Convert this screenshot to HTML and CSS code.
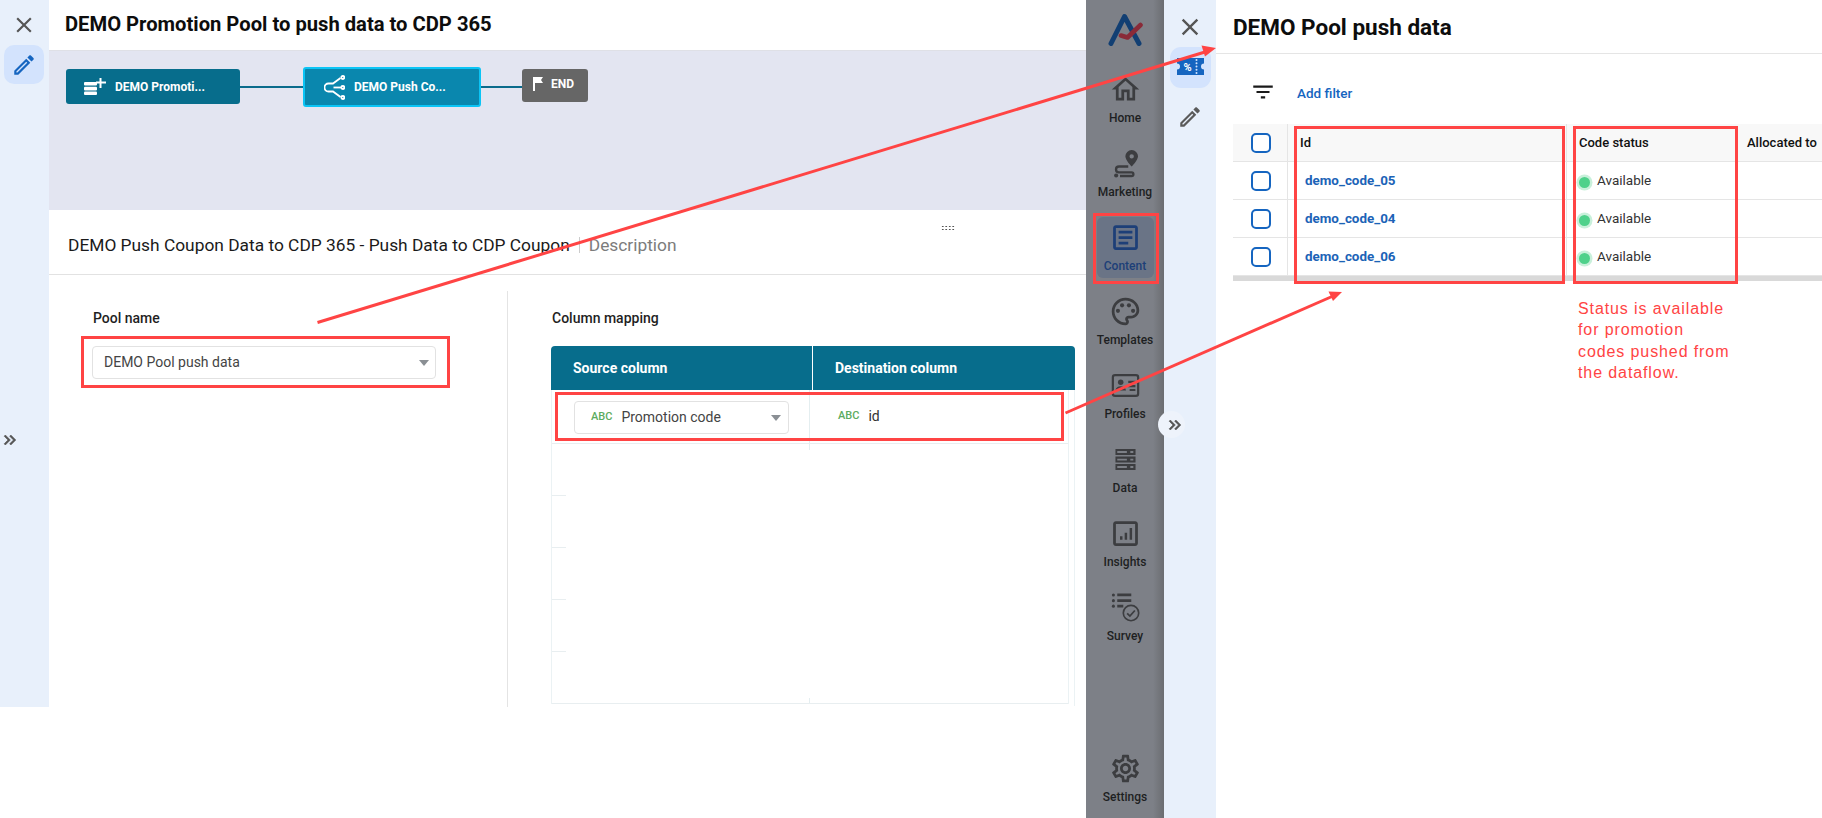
FILE: index.html
```html
<!DOCTYPE html>
<html lang="en">
<head>
<meta charset="utf-8">
<title>DEMO Promotion Pool</title>
<link rel="stylesheet" href="styles.css">
</head>
<body>
<div class="page">
  <section class="flow-window">
    <aside class="rail rail-left">
      <svg class="icon-26 close close-left" viewBox="0 0 24 24"><path d="M19 6.41L17.59 5 12 10.59 6.41 5 5 6.41 10.59 12 5 17.59 6.41 19 12 13.41 17.59 19 19 17.59 13.41 12z"/></svg>
      <div class="tile tile-left">
        <svg class="icon-26 blue" viewBox="0 0 24 24"><path d="M3 17.25V21h3.75L17.81 9.94l-3.75-3.75L3 17.25zM5.92 19H5v-.92l9.06-9.06.92.92L5.92 19zM20.71 7.04a.996.996 0 000-1.41l-2.34-2.34c-.2-.2-.45-.29-.71-.29s-.51.1-.7.29l-1.83 1.83 3.75 3.75 1.83-1.83z"/></svg>
      </div>
      <svg class="expand expand-left" viewBox="0 0 24 24"><path d="M6.41 6L5 7.41 9.58 12 5 16.59 6.41 18l6-6z"/><path d="M13 6l-1.41 1.41L16.17 12l-4.58 4.59L13 18l6-6z"/></svg>
    </aside>
    <main class="flow-main">
      <header class="flow-head"><h1 class="title title-flow">DEMO Promotion Pool to push data to CDP 365</h1></header>
      <div class="canvas">
        <div class="wire wire-a"></div>
        <div class="wire wire-b"></div>
        <div class="node node-source">
          <svg class="node-icon icon-source" viewBox="0 0 22 17"><g fill="#fff"><rect x="0" y="4" width="13" height="3.6" rx="1"/><rect x="0" y="8.8" width="13" height="3.6" rx="1"/><rect x="0" y="13.4" width="13" height="3.6" rx="1"/><path d="M15.5 0h2v3.5H22v2h-4.5V10h-2V5.5H12v-2h3.5z"/></g></svg>
          <span>DEMO Promoti...</span>
        </div>
        <div class="node node-dest">
          <svg class="node-icon icon-dest" viewBox="0 0 21 25" fill="none" stroke="#fff" stroke-width="1.8"><path d="M16.500 3L9 8.500H4.500a4 4 0 000 8H9L16.500 22"/><path d="M9.500 12.500h7.500"/><circle cx="18.800" cy="2.500" r="1.500"/><circle cx="18.800" cy="12.500" r="1.500"/><circle cx="18.800" cy="22.500" r="1.500"/></svg>
          <span>DEMO Push Co...</span>
        </div>
        <div class="node node-end">
          <svg class="node-icon icon-end" viewBox="0 0 10 14"><path fill="#fff" d="M0 0h10L8 3l2 3H2v8H0z"/></svg>
          <span>END</span>
        </div>
      </div>
      <div class="step-head">
        <span class="step-name">DEMO Push Coupon Data to CDP 365 - Push Data to CDP Coupon</span>
        <span class="step-sep"></span>
        <span class="step-desc">Description</span>
        <span class="grip"></span>
      </div>
      <div class="step-body">
        <div class="pool-col">
          <div class="field-label">Pool name</div>
          <div class="select select-pool"><span>DEMO Pool push data</span><i class="caret"></i></div>
        </div>
        <div class="map-col">
          <div class="field-label">Column mapping</div>
          <div class="map-head"><div class="map-h map-h-a">Source column</div><div class="map-h map-h-b">Destination column</div></div>
          <div class="map-outer">
            <div class="map-body">
              <div class="map-row">
                <div class="map-cell-a">
                  <div class="select select-source"><span class="abc">ABC</span><span>Promotion code</span><i class="caret"></i></div>
                </div>
                <div class="map-cell-b"><span class="abc">ABC</span><span>id</span></div>
              </div>
              <div class="tick tick-first"></div>
              <div class="tick"></div>
              <div class="tick"></div>
              <div class="tick"></div>
              <div class="tick tick-last"></div>
            </div>
          </div>
        </div>
      </div>
    </main>
  </section>

  <nav class="nav">
    <svg class="logo" viewBox="0 0 35 33" fill="none" stroke-linecap="round" stroke-linejoin="round"><path d="M3 30.500L16.500 3.500 31 30.500" stroke="#123f73" stroke-width="5"/><path d="M13 22.500l6.500 2L32.500 12" stroke="#8a2a38" stroke-width="4.600"/></svg>
    <div class="nav-items">
      <div class="nav-item"><svg class="nav-icon" viewBox="0 0 24 24"><path d="M12 5.69l5 4.5V18h-2v-6H9v6H7v-7.81l5-4.5M12 3L2 12h3v8h6v-6h2v6h6v-8h3L12 3z"/></svg><span>Home</span></div>
      <div class="nav-item"><svg class="nav-icon" viewBox="0 0 24 24"><path d="M16.500 2.200a4.600 4.600 0 00-4.600 4.600c0 3 4.600 7.400 4.600 7.400s4.600-4.400 4.600-7.400a4.600 4.600 0 00-4.600-4.600zm0 6.200a1.600 1.600 0 110-3.200 1.600 1.600 0 010 3.200z"/><path fill="none" stroke="#3c3d40" stroke-width="1.700" d="M14 14.200H7.200a2.100 2.100 0 000 4.200h9.200a1.300 1.300 0 010 2.700H8"/><circle cx="5.200" cy="20.700" r="1.500"/></svg><span>Marketing</span></div>
      <div class="nav-item nav-active"><svg class="nav-icon" viewBox="0 0 24 24"><path d="M19 5v14H5V5h14m0-2H5c-1.100 0-2 .9-2 2v14c0 1.100.9 2 2 2h14c1.100 0 2-.9 2-2V5c0-1.100-.9-2-2-2z"/><path d="M14 17H7v-2h7v2zm3-4H7v-2h10v2zm0-4H7V7h10v2z"/></svg><span>Content</span></div>
      <div class="nav-item"><svg class="nav-icon" viewBox="0 0 24 24"><path d="M12 22C6.490 22 2 17.510 2 12S6.490 2 12 2s10 4.040 10 9c0 3.310-2.690 6-6 6h-1.770c-.28 0-.5.22-.5.5 0 .12.05.23.13.33.41.47.64 1.060.64 1.670 0 1.380-1.120 2.500-2.500 2.500zm0-18c-4.410 0-8 3.590-8 8s3.590 8 8 8c.28 0 .5-.22.5-.5 0-.16-.08-.28-.14-.35-.41-.46-.63-1.050-.63-1.650 0-1.380 1.120-2.500 2.500-2.500H16c2.210 0 4-1.790 4-4 0-3.860-3.590-7-8-7z"/><circle cx="6.500" cy="11.500" r="1.500"/><circle cx="9.500" cy="7.500" r="1.500"/><circle cx="14.500" cy="7.500" r="1.500"/><circle cx="17.500" cy="11.500" r="1.500"/></svg><span>Templates</span></div>
      <div class="nav-item"><svg class="nav-icon" viewBox="0 0 24 24"><rect x="2.800" y="4.400" width="18.400" height="15.200" rx="1.600" fill="none" stroke="#3c3d40" stroke-width="1.600"/><circle cx="8.500" cy="9.600" r="2"/><path d="M4.600 15.600c.4-2 2-3 3.900-3s3.500 1 3.900 3z"/><path d="M14 8.500h5.200v1.600H14zM14 11.600h5.200v1.600H14zM15 14.600h4.200V16H15z"/></svg><span>Profiles</span></div>
      <div class="nav-item"><svg class="nav-icon" viewBox="0 0 24 24"><path fill-rule="evenodd" d="M4.700 4.400h14.600v4.300H4.700zM6 5.900v1.300h7V5.900zM15.500 5.900v1.300h2.200V5.900zM4.700 9.900h14.600v4.300H4.700zM6 11.400v1.300h7v-1.300zM15.500 11.400v1.300h2.200v-1.300zM4.700 15.300h14.600v4.300H4.700zM6 16.800v1.300h7v-1.300zM15.500 16.800v1.300h2.200v-1.300z"/></svg><span>Data</span></div>
      <div class="nav-item"><svg class="nav-icon" viewBox="0 0 24 24"><path d="M19 5v14H5V5h14m0-2H5c-1.100 0-2 .9-2 2v14c0 1.100.9 2 2 2h14c1.100 0 2-.9 2-2V5c0-1.100-.9-2-2-2z"/><path d="M8 14h1.800v2.600H8zM11.400 11.400h1.800v5.200h-1.800zM15 8h1.800v8.600H15z"/></svg><span>Insights</span></div>
      <div class="nav-item"><svg class="nav-icon" viewBox="0 0 24 24"><circle cx="3.200" cy="2.900" r="1.100"/><circle cx="3.200" cy="7" r="1.100"/><circle cx="3.200" cy="11" r="1.100"/><path d="M6 1.900h10.200v2H6zM6 6h10.200v2H6zM6 10h4.400v2H6z"/><circle cx="16" cy="16" r="5.600" fill="none" stroke="#3c3d40" stroke-width="1.200"/><path fill="none" stroke="#3c3d40" stroke-width="1.300" d="M13.200 16.200l2 2 3.600-4"/></svg><span>Survey</span></div>
    </div>
    <div class="nav-item nav-bottom"><svg class="nav-icon" viewBox="0 0 24 24"><path d="M19.430 12.980c.04-.32.07-.64.07-.98 0-.34-.03-.66-.07-.98l2.110-1.650c.19-.15.24-.42.12-.64l-2-3.460c-.09-.16-.26-.25-.44-.25-.06 0-.12.01-.17.03l-2.490 1c-.52-.4-1.080-.73-1.690-.98l-.38-2.650C14.460 2.180 14.250 2 14 2h-4c-.25 0-.46.18-.49.42l-.38 2.650c-.61.25-1.170.59-1.690.98l-2.490-1c-.06-.02-.12-.03-.18-.03-.17 0-.34.09-.43.25l-2 3.460c-.13.22-.07.49.12.64l2.110 1.650c-.04.32-.07.65-.07.98 0 .33.03.66.07.98l-2.110 1.650c-.19.15-.24.42-.12.64l2 3.460c.09.16.26.25.44.25.06 0 .12-.01.17-.03l2.490-1c.52.4 1.080.73 1.690.98l.38 2.650c.03.24.24.42.49.42h4c.25 0 .46-.18.49-.42l.38-2.650c.61-.25 1.170-.59 1.690-.98l2.490 1c.06.02.12.03.18.03.17 0 .34-.09.43-.25l2-3.460c.12-.22.07-.49-.12-.64l-2.110-1.650zm-1.980-1.710c.04.31.05.52.05.73 0 .21-.02.43-.05.73l-.14 1.130.89.7 1.080.84-.7 1.210-1.270-.51-1.040-.42-.9.68c-.43.32-.84.56-1.250.73l-1.060.43-.16 1.130-.2 1.350h-1.400l-.19-1.350-.16-1.130-1.060-.43c-.43-.18-.83-.41-1.230-.71l-.91-.7-1.060.43-1.270.51-.7-1.210 1.080-.84.89-.7-.14-1.130c-.03-.31-.05-.54-.05-.74s.02-.43.05-.73l.14-1.130-.89-.7-1.080-.84.7-1.210 1.270.51 1.040.42.9-.68c.43-.32.84-.56 1.250-.73l1.060-.43.16-1.130.2-1.350h1.390l.19 1.350.16 1.130 1.060.43c.43.18.83.41 1.230.71l.91.7 1.060-.43 1.270-.51.7 1.210-1.070.85-.89.7.14 1.130zM12 8c-2.210 0-4 1.790-4 4s1.790 4 4 4 4-1.790 4-4-1.790-4-4-4zm0 6c-1.100 0-2-.9-2-2s.9-2 2-2 2 .9 2 2-.9 2-2 2z"/></svg><span>Settings</span></div>
  </nav>

  <aside class="rail rail-right">
    <svg class="icon-28 close" viewBox="0 0 24 24"><path d="M19 6.410L17.590 5 12 10.590 6.410 5 5 6.410 10.590 12 5 17.590 6.410 19 12 13.410 17.590 19 19 17.590 13.410 12z"/></svg>
    <div class="tile tile-right">
      <svg class="ticket" viewBox="0 0 27 17"><path fill="#1565c0" d="M1 0h26v5.500a3 3 0 000 6V17H0v-5.500a3 3 0 000-6V0z"/><text x="10.500" y="13" class="ticket-pct">%</text><g fill="#d3e3fd"><circle cx="19.500" cy="2" r="1"/><circle cx="19.500" cy="5.200" r="1"/><circle cx="19.500" cy="8.500" r="1"/><circle cx="19.500" cy="11.800" r="1"/><circle cx="19.500" cy="15" r="1"/></g></svg>
    </div>
    <svg class="icon-26 pencil-gray" viewBox="0 0 24 24"><path d="M3 17.250V21h3.750L17.810 9.940l-3.750-3.750L3 17.250zM5.920 19H5v-.92l9.060-9.060.92.92L5.920 19zM20.710 7.040a.996.996 0 000-1.410l-2.340-2.340c-.2-.2-.45-.29-.71-.29s-.51.1-.7.29l-1.830 1.830 3.750 3.750 1.830-1.830z"/></svg>
    <div class="bubble"><svg class="expand" viewBox="0 0 24 24"><path d="M6.410 6L5 7.410 9.580 12 5 16.590 6.410 18l6-6z"/><path d="M13 6l-1.410 1.410L16.170 12l-4.580 4.590L13 18l6-6z"/></svg></div>
  </aside>

  <section class="pool-window">
    <header class="pool-head"><h2 class="title title-pool">DEMO Pool push data</h2></header>
    <div class="filter-bar">
      <svg class="icon-26 filter" viewBox="0 0 24 24"><path d="M10 18h4v-2h-4v2zM3 6v2h18V6H3zm3 7h12v-2H6v2z"/></svg>
      <span class="add-filter">Add filter</span>
    </div>
    <div class="codes">
      <div class="codes-row codes-head">
        <div class="cell-check"><i class="check"></i></div>
        <div class="cell cell-id">Id</div>
        <div class="cell cell-status">Code status</div>
        <div class="cell cell-alloc">Allocated to</div>
      </div>
      <div class="codes-row">
        <div class="cell-check"><i class="check"></i></div>
        <div class="cell cell-id"><a class="code-link">demo_code_05</a></div>
        <div class="cell cell-status"><i class="dot"></i><span>Available</span></div>
        <div class="cell cell-alloc"></div>
      </div>
      <div class="codes-row">
        <div class="cell-check"><i class="check"></i></div>
        <div class="cell cell-id"><a class="code-link">demo_code_04</a></div>
        <div class="cell cell-status"><i class="dot"></i><span>Available</span></div>
        <div class="cell cell-alloc"></div>
      </div>
      <div class="codes-row">
        <div class="cell-check"><i class="check"></i></div>
        <div class="cell cell-id"><a class="code-link">demo_code_06</a></div>
        <div class="cell cell-status"><i class="dot"></i><span>Available</span></div>
        <div class="cell cell-alloc"></div>
      </div>
      <div class="codes-foot"></div>
    </div>
  </section>

  <svg class="arrows" viewBox="0 0 1822 818">
    <path d="M317.500 322.500L1205 52" class="arrow-line"/>
    <path d="M1216 48l-14.500-2.500 3.500 11z" class="arrow-head"/>
    <path d="M1065.500 413L1332 296.500" class="arrow-line"/>
    <path d="M1342 292l-13.500-.500 4.500 9.500z" class="arrow-head"/>
  </svg>
  <div class="mark mark-pool"></div>
  <div class="mark mark-row"></div>
  <div class="mark mark-content"></div>
  <div class="mark mark-id"></div>
  <div class="mark mark-status"></div>
  <p class="note">Status is available<br>for promotion<br>codes pushed from<br>the dataflow.</p>
</div>
</body>
</html>
```

FILE: styles.css
```css
* { box-sizing: border-box; }
html, body { margin: 0; height: 100%; background: #fff; overflow: hidden; }
body { font-family: Roboto, "Liberation Sans", sans-serif; color: #212121; }
.page { position: relative; display: flex; width: 1822px; height: 818px; align-items: flex-start; }

.title { margin: 0; font-weight: 700; line-height: 28px; color: #0d0d0d; white-space: nowrap; }
.title-flow { font-size: 20.200px; }
.title-pool { font-size: 22.500px; }

/* left window */
.flow-window { display: flex; width: 1086px; height: 707px; flex: none; }
.rail { position: relative; display: flex; flex-direction: column; align-items: center; background: #e8f0fb; flex: none; }
.rail-left { width: 49px; height: 707px; padding-top: 12px; }
.icon-26 { width: 26px; height: 26px; display: block; flex: none; }
.icon-28 { width: 28px; height: 28px; display: block; flex: none; }
.close { fill: #555; }
.close-left { margin-right: 1px; }
.blue { fill: #1565c0; }
.tile { display: flex; align-items: center; justify-content: center; background: #d3e3fd; }
.tile-left { width: 40px; height: 39px; margin-top: 7px; border-radius: 10px; margin-right: 1px; }
.expand { width: 20px; height: 20px; fill: #555; stroke: #555; stroke-width: .7; display: block; }
.expand-left { position: absolute; left: 0; top: 430px; }

.flow-main { flex: 1; min-width: 0; display: flex; flex-direction: column; }
.flow-head { height: 50px; padding: 10px 0 0 16px; flex: none; }
.canvas { position: relative; height: 160px; background: #e3e5f1; border-top: 1px solid #dfe0e6; flex: none; }
.node { position: absolute; display: flex; align-items: center; color: #fff; font-size: 12px; font-weight: 700; border-radius: 3px; white-space: nowrap; }
.node-source { left: 17px; top: 18px; width: 174px; height: 35px; background: #076d8c; padding-left: 18px; }
.node-dest { left: 254px; top: 16px; width: 178px; height: 40px; background: #0a87ae; border: 2px solid #0bc4f5; padding-left: 19px; }
.node-end { left: 473px; top: 18px; width: 66px; height: 33px; background: #666; padding-left: 11px; }
.node-icon { display: block; flex: none; }
.icon-source { width: 22px; height: 17px; margin-right: 9px; margin-top: -1px; }
.icon-dest { width: 21px; height: 25px; margin-right: 9px; }
.icon-end { width: 10px; height: 14px; margin-right: 8px; margin-top: -3px; }
.node-end span { margin-top: -3px; }
.wire { position: absolute; top: 35px; height: 2px; background: #0a6b8c; }
.wire-a { left: 191px; width: 63px; }
.wire-b { left: 432px; width: 41px; }

.step-head { position: relative; height: 65px; flex: none; display: flex; align-items: center; padding: 6px 0 0 19px; border-bottom: 1px solid #e2e2e2; font-size: 17.350px; }
.step-name { color: #1a1a1a; white-space: nowrap; }
.step-sep { width: 1px; height: 16px; background: #ccc; margin: 0 9px; }
.step-desc { color: #7c7c7c; }
.grip { position: absolute; left: 892px; top: 15px; width: 14px; height: 5px; background-image: radial-gradient(circle, #555 0.8px, transparent 1px); background-size: 3.500px 3px; }

.step-body { flex: 1; display: flex; padding-top: 16px; }
.pool-col { width: 459px; border-right: 1px solid #e4e4e4; padding: 17px 0 0 43px; flex: none; }
.map-col { flex: 1; padding: 17px 0 0 43px; }
.field-label { font-size: 14px; font-weight: 500; line-height: 20px; color: #1f1f1f; margin-bottom: 18px; padding-left: 1px; }
.select { position: relative; display: flex; align-items: center; height: 33px; padding-bottom: 2px; border: 1px solid #e2e2e2; border-radius: 4px; background: #fff; font-size: 14px; color: #444; }
.select-pool { width: 344px; padding-left: 11px; }
.caret { position: absolute; top: 13px; width: 0; height: 0; border-left: 5px solid transparent; border-right: 5px solid transparent; border-top: 6px solid #8a8f94; }
.select-pool .caret { right: 6px; }
.select-source .caret { right: 7px; }

.map-head { display: flex; width: 524px; height: 44px; background: #076d8c; border-radius: 4px 4px 0 0; color: #fff; font-size: 14px; font-weight: 700; align-items: stretch; }
.map-h { display: flex; align-items: center; padding-left: 22px; }
.map-h-a { width: 262px; border-right: 1px solid #fff; }
.map-outer { width: 524px; height: 316px; border-right: 1px solid #ebf2f4; padding-right: 5px; }
.map-body { border-left: 1px solid #ebf2f4; border-right: 1px solid #ebf2f4; height: 314px; }
.map-row { display: flex; height: 54px; border-bottom: 1px solid #e8eef0; }
.map-cell-a { width: 258px; border-right: 1px solid #e4eef0; padding: 11px 0 0 22px; flex: none; }
.select-source { width: 215px; padding-left: 16px; }
.abc { font-size: 11px; font-weight: 500; color: #5cab60; margin-right: 9px; }
.map-cell-b { display: flex; align-items: center; padding: 0 0 2px 28px; font-size: 14px; color: #333; }
.tick { height: 52px; background-image: linear-gradient(#e8eef0, #e8eef0); background-repeat: no-repeat; background-size: 14px 1px; background-position: left bottom; }
.tick-first { background-image: linear-gradient(#e8eef0, #e8eef0), linear-gradient(#e4eef0, #e4eef0); background-size: 14px 1px, 1px 6px; background-position: left bottom, 257px top; }
.tick-last { background-image: linear-gradient(#e8eef0, #e8eef0), linear-gradient(#e4eef0, #e4eef0); background-size: 100% 1px, 1px 6px; background-position: left bottom, 257px bottom; }

/* nav */
.nav { position: relative; display: flex; flex-direction: column; align-items: center; width: 78px; height: 818px; flex: none; background: linear-gradient(90deg, #7d8087 0, #7d8087 86%, #6b6d71 100%); }
.logo { width: 35px; height: 33px; margin-top: 13px; margin-bottom: 23px; display: block; flex: none; }
.nav-items { display: flex; flex-direction: column; gap: 13px; flex: 1; }
.nav-item { display: flex; flex-direction: column; align-items: center; width: 57px; height: 61px; padding-top: 4px; font-size: 12px; font-weight: 500; line-height: 16px; color: #1d1f22; border-radius: 6px; white-space: nowrap; }
.nav-icon { width: 33px; height: 33px; margin-bottom: 3.500px; display: block; fill: #3c3d40; flex: none; }
.nav-active { background: #6a7486; color: #1d3f78; }
.nav-active .nav-icon { fill: #1d3f78; }
.nav-bottom { margin-bottom: 9px; }

/* right rail */
.rail-right { width: 52px; height: 818px; padding-top: 13px; }
.tile-right { width: 41px; height: 41px; border-radius: 11px; margin-top: 6px; margin-left: 1px; padding-bottom: 3px; }
.ticket { width: 27px; height: 17px; display: block; }
.ticket-pct { font-family: Roboto, sans-serif; font-size: 11px; font-weight: 700; fill: #fff; text-anchor: middle; }
.pencil-gray { fill: #5a5a5a; margin-top: 16px; }
.bubble { position: absolute; left: -6px; top: 411px; width: 27px; height: 27px; border-radius: 50%; background: #eef3fb; display: flex; align-items: center; justify-content: flex-end; }

/* right window */
.pool-window { flex: 1; min-width: 0; overflow: hidden; height: 818px; }
.pool-head { height: 54px; padding: 13px 0 0 17px; border-bottom: 1px solid #e5e5e5; }
.filter-bar { display: flex; align-items: center; height: 70px; padding: 8px 0 0 34px; }
.filter { fill: #1a1a1a; margin-top: -2px; }
.add-filter { margin-left: 21px; font-size: 13.500px; font-weight: 500; color: #1565c0; }
.codes { margin-left: 17px; }
.codes-row { display: grid; grid-template-columns: 55px 279px 170px 1fr; height: 38px; border-bottom: 1px solid #e5e5e5; }
.codes-head { background: #f8f8f8; font-size: 13px; font-weight: 500; color: #111; }
.cell-check { display: flex; align-items: center; justify-content: center; border-right: 1px solid #e5e5e5; padding: 1px 0 0 1px; }
.check { display: block; width: 20px; height: 20px; border: 2px solid #1565c0; border-radius: 5px; background: #fff; }
.cell { display: flex; align-items: center; min-width: 0; white-space: nowrap; overflow: hidden; }
.cell-id { padding-left: 12px; border-right: 1px solid #e5e5e5; }
.cell-status { padding-left: 12px; }
.cell-alloc { padding-left: 10px; }
.codes-row:not(.codes-head) .cell-id { padding-left: 17px; }
.codes-row:not(.codes-head) .cell-status { padding-left: 11px; color: #333; font-size: 13.500px; }
.cell-status span { padding-bottom: 2px; }
.code-link { font-size: 13.400px; font-weight: 700; color: #1c63b7; }
.dot { display: block; width: 11px; height: 11px; margin: 3px 7px 0 1px; border-radius: 50%; background: #4fd18b; box-shadow: 0 0 0 2.500px #c9f0db; flex: none; }
.codes-foot { height: 5px; background: #d9d9d9; }

/* annotations */
.arrows { position: absolute; left: 0; top: 0; width: 1822px; height: 818px; pointer-events: none; }
.arrow-line { fill: none; stroke: #ff4444; stroke-width: 3; }
.arrow-head { fill: #ff4444; }
.mark { position: absolute; border: 3px solid #ff4444; pointer-events: none; }
.mark-pool { left: 81px; top: 336px; width: 369px; height: 52px; }
.mark-row { left: 555px; top: 392px; width: 509px; height: 49px; }
.mark-content { left: 1093px; top: 213px; width: 66px; height: 71px; }
.mark-id { left: 1294px; top: 126px; width: 271px; height: 158px; }
.mark-status { left: 1573px; top: 126px; width: 165px; height: 158px; }
.note { position: absolute; left: 1578px; top: 298px; margin: 0; font-family: "Liberation Sans", Arial, sans-serif; font-size: 16px; line-height: 21.300px; color: #ff4444; letter-spacing: .9px; white-space: nowrap; }
```
